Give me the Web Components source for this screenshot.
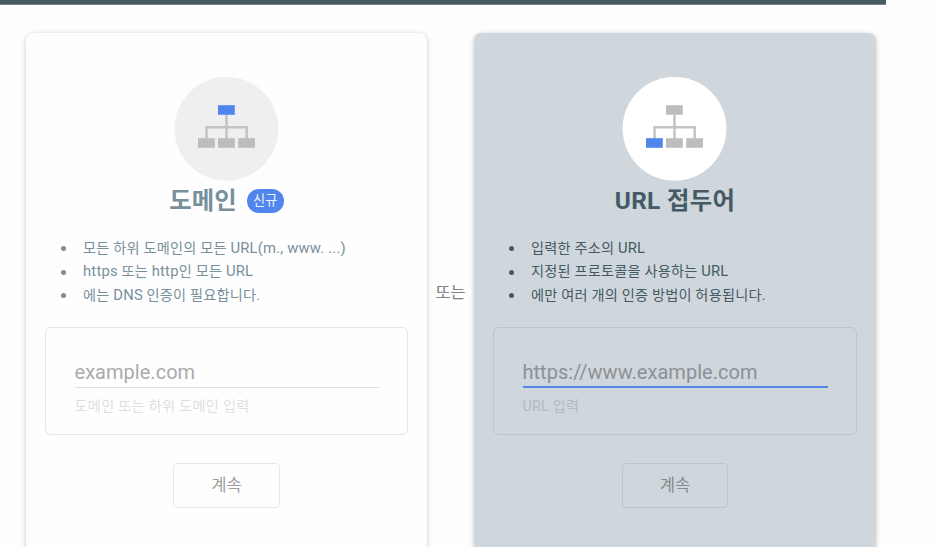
<!DOCTYPE html>
<html lang="ko">
<head>
<meta charset="utf-8">
<title>속성 유형 선택</title>
<style>
html,body{margin:0;height:547px;overflow:hidden;background:#fefefe;font-family:Roboto,"Noto Sans CJK KR",sans-serif}
</style>
</head>
<body>
<property-chooser></property-chooser>
<script>
const define = (name, html, setup) => customElements.define(name, class extends HTMLElement {
  connectedCallback() {
    if (this.shadowRoot) return;
    this.attachShadow({mode: 'open'}).innerHTML = html;
    if (setup) setup(this, this.shadowRoot);
  }
});

define('site-icon', `
<style>
:host{display:block;width:105px;height:104px}
svg{display:block}
.disc{fill:var(--disc)}
.b{fill:#bdbdbd}.line{fill:none;stroke:#c2c3c4;stroke-width:2.5}
:host([active="top"]) .top,:host([active="left"]) .left{fill:#5086ec}
</style>
<svg width="105" height="104" viewBox="0 0 105 104">
<circle class="disc" cx="52.5" cy="51.7" r="51.9"/>
<path class="line" d="M52.5 38v24M32.5 62V50.3h40.2V62"/>
<rect class="b top" x="44" y="28.2" width="16.8" height="9.6"/>
<rect class="b left" x="24" y="61.2" width="16.8" height="9.6"/>
<rect class="b" x="44" y="61.2" width="16.8" height="9.6"/>
<rect class="b" x="64.2" y="61.2" width="16.8" height="9.6"/>
</svg>`);

define('new-badge', `
<style>
:host{display:block;box-sizing:border-box;width:37px;height:24px;border-radius:12px;background:#5086ec;color:#edf3ff;font-size:13.2px;font-weight:400;line-height:23px;text-align:center}
</style><slot></slot>`);

define('url-field', `
<style>
:host{display:block;box-sizing:border-box;height:108px;margin:0 19px;padding:30px 28.5px 0;border:1px solid var(--outline);border-radius:6px}
.value{height:28px;line-height:28px;font-size:20px;letter-spacing:.03px;color:var(--value);white-space:nowrap}
.rule{height:2px;display:flex;align-items:flex-end}
.rule i{display:block;width:100%;height:var(--rule-h);background:var(--rule)}
.hint{margin-top:8px;line-height:20px;font-size:14.2px;letter-spacing:.27px;color:var(--hint);white-space:nowrap}
</style>
<div class="value"><slot></slot></div><div class="rule"><i></i></div><div class="hint"><slot name="hint"></slot></div>`);

define('outline-button', `
<style>
:host{display:block;box-sizing:border-box;width:106.5px;height:45px;margin:28px auto 0;border:1px solid var(--button-line);border-radius:4px;text-align:center;line-height:43px;font-size:16.6px;color:var(--button-text)}
</style><slot></slot>`);

define('property-card', `
<style>
:host{display:block;box-sizing:border-box;width:401px;height:518px;padding-top:43.5px;border-radius:8px;background:#fefefe;box-shadow:0 1px 5px rgba(0,0,0,.23);
--disc:#edeff1;--outline:#e3e4e5;--value:#aaa;--rule:#e0e0e0;--rule-h:1px;--hint:#dedede;--button-line:#e8e8e8;--button-text:#a0a0a0;color:#78909c}
:host([selected]){width:402px;background:#cfd6dc;--disc:#fff;--outline:#bfc4c6;--value:#8b9194;--rule:#5086ec;--rule-h:2px;--hint:#b4babe;--button-line:#bfc4c6;--button-text:#868c8e;color:#455a64}
site-icon{margin:0 auto}
:host([selected]) site-icon{margin-left:148px}
.title{display:flex;align-items:center;justify-content:center;gap:10px;height:40px;font-size:24.4px;font-weight:700;line-height:40px;white-space:nowrap}
:host([selected]) .title{letter-spacing:.3px}
ul{list-style:none;margin:16px 0 19px;padding:0 0 0 35px;height:71.5px;font-size:14.2px;line-height:23.7px;letter-spacing:.2px;white-space:nowrap}
li{display:flex;align-items:center;height:23.7px}
li::before{content:"";width:5px;height:5px;border-radius:50%;background:currentColor;margin-right:17px}
.latin{font-size:14.8px}
</style>
<site-icon></site-icon>
<div class="title"><slot name="title"></slot><slot name="badge"></slot></div>
<ul></ul>
<url-field><slot name="example"></slot><slot name="hint" slot="hint"></slot></url-field>
<outline-button>계속</outline-button>`, (host, root) => {
  root.querySelector('site-icon').setAttribute('active', host.getAttribute('active'));
  for (const text of host.getAttribute('points').split('|')) {
    const li = document.createElement('li');
    const line = document.createElement('div');
    line.innerHTML = text.replace(/[A-Za-z(][A-Za-z(),. ]*[A-Za-z)]/g, '<span class="latin">$&</span>');
    li.append(line);
    root.querySelector('ul').append(li);
  }
});

define('property-chooser', `
<style>
:host{display:block;width:933px;height:547px;overflow:hidden}
.bar{width:886px;height:4px;background:#485a62;border-bottom:1px solid #78858b}
.cards{display:flex;align-items:flex-start;padding:28px 0 0 26px}
.or{width:47px;margin-top:247px;text-align:center;font-size:16.4px;line-height:26px;color:#808080}
</style>
<div class="bar"></div>
<div class="cards">
<property-card active="top" points="모든 하위 도메인의 모든 URL(m., www. ...)|https 또는 http인 모든 URL|에는 DNS 인증이 필요합니다.">
<span slot="title">도메인</span><new-badge slot="badge">신규</new-badge><span slot="example">example.com</span><span slot="hint">도메인 또는 하위 도메인 입력</span>
</property-card>
<div class="or">또는</div>
<property-card selected active="left" points="입력한 주소의 URL|지정된 프로토콜을 사용하는 URL|에만 여러 개의 인증 방법이 허용됩니다.">
<span slot="title">URL 접두어</span><span slot="example">https://www.example.com</span><span slot="hint">URL 입력</span>
</property-card>
</div>`);
</script>
</body>
</html>
